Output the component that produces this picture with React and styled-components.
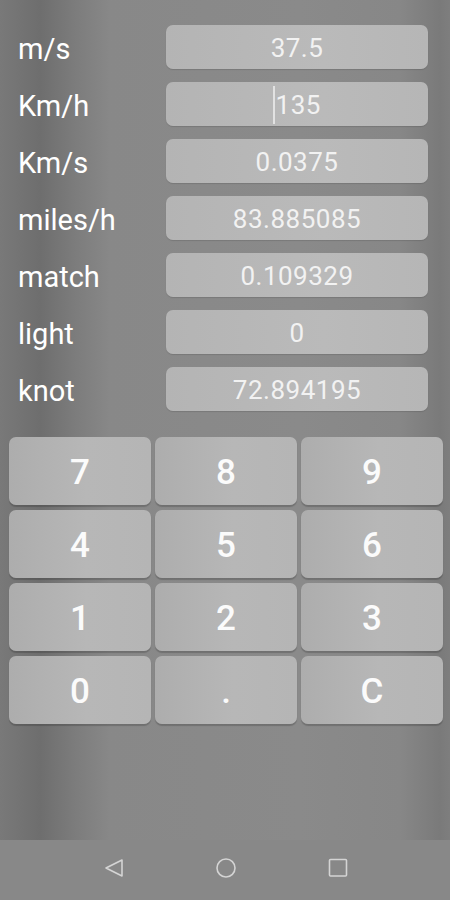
import React from 'react';
import styled, { createGlobalStyle } from 'styled-components';

const Global = createGlobalStyle`
  html, body {
    margin: 0;
    padding: 0;
    background: #858585;
  }
  * { box-sizing: border-box; }
`;

const Screen = styled.div`
  width: 450px;
  height: 900px;
  display: flex;
  flex-direction: column;
  font-family: Roboto, "Liberation Sans", sans-serif;
  color: #fff;
  background: linear-gradient(90deg, #797979 0px, #6e6e6e 40px, #7c7c7c 75px, #888 110px, #8a8a8a 300px, #878787 400px, #7a7a7a 440px, #7e7e7e 450px);
`;

const Content = styled.div`
  flex: 1;
  display: flex;
  flex-direction: column;
  padding-top: 25px;
`;

const Fields = styled.div`
  display: flex;
  flex-direction: column;
  gap: 13px;
  padding: 0 22px 0 18px;
`;

const Row = styled.div`
  display: flex;
  align-items: center;
  height: 44px;
`;

const Label = styled.div`
  width: 148px;
  font-size: 29px;
  line-height: 34px;
  padding-top: 3px;
`;

const Field = styled.div`
  flex: 1;
  height: 44px;
  border-radius: 7px;
  background: linear-gradient(90deg, #b4b4b4, #bababa 60%, #b6b6b6);
  box-shadow: 0 1px 1px rgba(0, 0, 0, 0.12);
  display: flex;
  align-items: center;
  justify-content: center;
  font-size: 26px;
  letter-spacing: 0.5px;
  padding-top: 1px;
  color: #f2f2f2;
`;

const Cursor = styled.span`
  display: inline-block;
  width: 1.5px;
  height: 38px;
  margin-right: 1px;
  background: #e2e2e2;
`;

const Pad = styled.div`
  margin: 26px 7px 0 9px;
  display: grid;
  grid-template-columns: repeat(3, 1fr);
  grid-auto-rows: 68px;
  column-gap: 4px;
  row-gap: 5px;
`;

const Key = styled.div`
  border-radius: 7px;
  background: linear-gradient(90deg, #adadad, #b7b7b7 55%, #b5b5b5);
  box-shadow: 0 1.5px 1px rgba(0, 0, 0, 0.18);
  display: flex;
  align-items: center;
  justify-content: center;
  padding-top: 3px;
  font-size: 35px;
  font-weight: 500;
  color: #fbfbfb;
`;

const NavBar = styled.div`
  height: 60px;
  background: #888888;
  display: flex;
  align-items: center;
  justify-content: center;
  gap: 90px;
  padding-left: 2px;
  padding-bottom: 4px;
`;

const NavIcon = styled.svg`
  width: 22px;
  height: 22px;
  fill: none;
  stroke: #d4d4d4;
  stroke-width: 1.6;
`;

const rows = [
  ['m/s', '37.5'],
  ['Km/h', '135', true],
  ['Km/s', '0.0375'],
  ['miles/h', '83.885085'],
  ['match', '0.109329'],
  ['light', '0'],
  ['knot', '72.894195'],
];

const keys = ['7', '8', '9', '4', '5', '6', '1', '2', '3', '0', '.', 'C'];

export default function App() {
  return (
    <Screen>
      <Global />
      <Content>
        <Fields>
          {rows.map(([label, value, focused]) => (
            <Row key={label}>
              <Label>{label}</Label>
              <Field>
                {focused && <Cursor />}
                {value}
              </Field>
            </Row>
          ))}
        </Fields>
        <Pad>
          {keys.map((k) => (
            <Key key={k}>{k}</Key>
          ))}
        </Pad>
      </Content>
      <NavBar>
        <NavIcon viewBox="0 0 22 22">
          <path d="M19 3 L3 11 L19 19 Z" strokeLinejoin="round" />
        </NavIcon>
        <NavIcon viewBox="0 0 22 22">
          <circle cx="11" cy="11" r="9" />
        </NavIcon>
        <NavIcon viewBox="0 0 22 22">
          <rect x="2.5" y="2.5" width="17" height="16.5" rx="1" />
        </NavIcon>
      </NavBar>
    </Screen>
  );
}
